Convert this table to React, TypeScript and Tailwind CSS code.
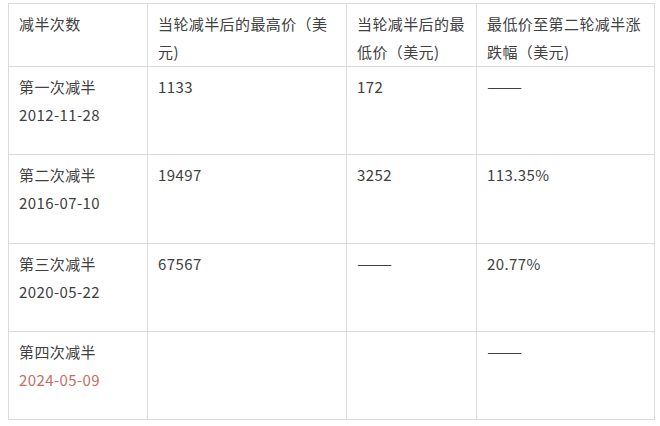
const rows: { label: string; date: string; high: string; low: string; change: string; highlight?: boolean }[] = [
  { label: "第一次减半", date: "2012-11-28", high: "1133", low: "172", change: "——" },
  { label: "第二次减半", date: "2016-07-10", high: "19497", low: "3252", change: "113.35%" },
  { label: "第三次减半", date: "2020-05-22", high: "67567", low: "——", change: "20.77%" },
  { label: "第四次减半", date: "2024-05-09", high: "", low: "", change: "——", highlight: true },
];

const heights = ["h-[88px]", "h-[89px]", "h-[88px]", "h-[88px]"];

export default function App() {
  return (
    <div
      className="h-[426px] w-[660px] bg-white pl-2 pt-[3px] text-[15px] leading-[28px] tracking-[0.4px] text-[#404040]"
      style={{ fontFamily: '"Noto Sans CJK SC", "Noto Sans", sans-serif' }}
    >
      <table className="w-[646px] table-fixed border-collapse">
        <colgroup>
          <col className="w-[139px]" />
          <col className="w-[199px]" />
          <col className="w-[130px]" />
          <col className="w-[178px]" />
        </colgroup>
        <thead>
          <tr className="h-[62px]">
            <Cell>减半次数</Cell>
            <Cell>当轮减半后的最高价（美元)</Cell>
            <Cell>当轮减半后的最低价（美元)</Cell>
            <Cell>最低价至第二轮减半涨跌幅（美元)</Cell>
          </tr>
        </thead>
        <tbody>
          {rows.map((r, i) => (
            <tr key={r.label} className={heights[i]}>
              <Cell>
                <div>{r.label}</div>
                <div className={r.highlight ? "text-[#c56e66]" : undefined}>{r.date}</div>
              </Cell>
              <Cell>{r.high}</Cell>
              <Cell>
                <Value text={r.low} />
              </Cell>
              <Cell>
                <Value text={r.change} />
              </Cell>
            </tr>
          ))}
        </tbody>
      </table>
    </div>
  );
}

// the em dashes come out narrow in this font, stretch them to the width in the picture
function Value({ text }: { text: string }) {
  if (text !== "——") return <>{text}</>;
  return <span className="inline-block origin-left scale-x-[1.4] tracking-normal">{text}</span>;
}

function Cell({ children }: { children?: React.ReactNode }) {
  return (
    <td className="border border-[#dcdcdc] px-[10px] pb-0 pt-[6px] align-top font-normal break-all">
      {children}
    </td>
  );
}
